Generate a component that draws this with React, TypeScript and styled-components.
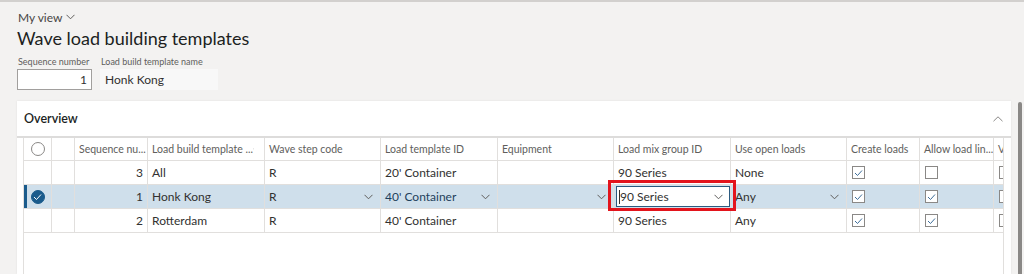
import React from 'react';
import styled, { createGlobalStyle } from 'styled-components';

const GlobalStyle = createGlobalStyle`
  html, body {
    margin: 0;
    padding: 0;
    background: #f3f2f1;
    font-family: Lato, "Open Sans", sans-serif;
    color: #323130;
    overflow: hidden;
  }
`;

const Page = styled.div`
  width: 1024px;
  height: 274px;
  border-top: 2px solid #d2d0ce;
  box-sizing: border-box;
  overflow: hidden;
  display: flex;
  flex-direction: column;
`;

const Top = styled.div`
  padding: 8px 0 0 17px;
  display: flex;
  flex-direction: column;
`;

const ViewSwitch = styled.div`
  display: flex;
  align-items: center;
  gap: 4px;
  font-size: 12px;
  color: #484644;
  height: 14px;
  padding-left: 1px;
`;

const Title = styled.h1`
  margin: 2px 0 0;
  font-size: 18px;
  font-weight: 400;
  color: #201f1e;
  line-height: 24px;
`;

const Fields = styled.div`
  display: flex;
  gap: 8px;
  margin-top: 6px;
`;

const Field = styled.div<{ $width: number }>`
  width: ${p => p.$width}px;
  display: flex;
  flex-direction: column;
  gap: 1px;
`;

const FieldLabel = styled.label`
  font-size: 9px;
  color: #605e5c;
  line-height: 12px;
  padding-left: 1px;
  white-space: nowrap;
`;

const FieldInput = styled.div<{ $right?: boolean; $plain?: boolean }>`
  height: 21px;
  box-sizing: border-box;
  display: flex;
  align-items: center;
  justify-content: ${p => (p.$right ? 'flex-end' : 'flex-start')};
  padding: 0 4px;
  font-size: 12px;
  background: ${p => (p.$plain ? '#f8f8f8' : '#fff')};
  border: 1px solid ${p => (p.$plain ? '#f8f8f8' : '#a19f9d')};
`;

const Body = styled.div`
  display: flex;
  flex: 1;
  margin-top: 11px;
  min-height: 0;
`;

const Card = styled.section`
  margin-left: 17px;
  width: 994px;
  background: #fff;
  box-shadow: 0 0 2px rgba(0, 0, 0, 0.08);
  display: flex;
  flex-direction: column;
`;

const CardHeader = styled.div`
  height: 35px;
  display: flex;
  align-items: center;
  justify-content: space-between;
  padding: 0 8px 0 7px;
  border-bottom: 2px solid #dddcdb;
  font-size: 12.5px;
  font-weight: 600;
  color: #201f1e;
`;

const ScrollTrack = styled.div`
  margin-left: 7px;
  width: 4px;
  display: flex;
  padding-top: 1px;
`;

const ScrollThumb = styled.div`
  flex: 1;
  background: #8a8886;
  border-radius: 2px 2px 0 0;
`;

const GridWrap = styled.div`
  margin: 0 7px 0 6px;
  flex: 1;
  overflow: hidden;
  border-left: 1px solid #e1dfdd;
  border-right: 1px solid #e1dfdd;
`;

const COLS = '28px 23px 73px 117px 116px 117px 116px 117px 116px 73px 74px 40px';

const Row = styled.div<{ $header?: boolean; $selected?: boolean }>`
  display: grid;
  grid-template-columns: ${COLS};
  height: ${p => (p.$header ? 23 : 24)}px;
  border-bottom: 1px solid #e1dfdd;
  box-sizing: border-box;
  background: ${p => (p.$selected ? '#cfdfeb' : '#fff')};
  position: relative;
`;

const SelectBar = styled.span`
  position: absolute;
  left: 0;
  top: 0;
  bottom: 0;
  width: 3px;
  background: #1a5b8c;
`;

const Cell = styled.div<{
  $align?: 'left' | 'right' | 'center';
  $header?: boolean;
  $lined?: boolean;
  $editing?: boolean;
}>`
  display: flex;
  align-items: center;
  justify-content: ${p => (p.$align === 'right' ? 'flex-end' : p.$align === 'center' ? 'center' : 'space-between')};
  padding: 0 4px 0 4px;
  border-right: ${p => (p.$lined === false ? 'none' : '1px solid #e1dfdd')};
  font-size: ${p => (p.$header ? '10.5px' : '12px')};
  color: ${p => (p.$header ? '#605e5c' : '#323130')};
  white-space: nowrap;
  overflow: ${p => (p.$editing ? 'visible' : 'hidden')};
  position: relative;
  z-index: ${p => (p.$editing ? 2 : 'auto')};
  min-width: 0;
`;

const Chev = styled.svg`
  flex: none;
  margin-right: 3px;
`;

const Radio = styled.span<{ $checked?: boolean }>`
  width: 14px;
  height: 14px;
  border-radius: 50%;
  box-sizing: border-box;
  border: 1px solid ${p => (p.$checked ? '#1a5b8c' : '#8a8886')};
  background: ${p => (p.$checked ? '#1a5b8c' : '#fff')};
  display: flex;
  align-items: center;
  justify-content: center;
`;

const Box = styled.span`
  width: 13px;
  height: 13px;
  box-sizing: border-box;
  border: 1px solid #8a8886;
  background: #fff;
  display: flex;
  align-items: center;
  justify-content: center;
  margin-left: 1px;
`;

const EditInput = styled.div`
  position: absolute;
  left: 2px;
  right: 0;
  top: 1px;
  bottom: 1px;
  border: 1px solid #2b5a80;
  background: #fff;
  display: flex;
  align-items: center;
  justify-content: space-between;
  padding: 0 3px 0 2px;
  font-size: 12px;
`;

const EditText = styled.span`
  display: flex;
  align-items: center;
`;

const Caret = styled.span`
  width: 1px;
  height: 14px;
  background: #323130;
`;

const Highlight = styled.span`
  position: absolute;
  left: -6px;
  right: -6px;
  top: -5px;
  bottom: -3px;
  border: 3px solid #e3141c;
  pointer-events: none;
`;

const SelectedText = styled.span`
  color: #1f3f5c;
`;

const Chevron = ({ color = '#605e5c' }: { color?: string }) => (
  <Chev width="9" height="6" viewBox="0 0 9 6">
    <path d="M0.5 0.8 L4.5 4.8 L8.5 0.8" fill="none" stroke={color} strokeWidth="1" />
  </Chev>
);

const Check = ({ color = '#3d6d99' }: { color?: string }) => (
  <svg width="9" height="8" viewBox="0 0 9 8">
    <path d="M1 4 L3.5 6.5 L8 1.5" fill="none" stroke={color} strokeWidth="1" />
  </svg>
);

const CheckBox = ({ on }: { on: boolean }) => <Box>{on && <Check />}</Box>;

type RowData = {
  seq: number;
  name: string;
  wave: string;
  template: string;
  mix: string;
  open: string;
  create: boolean;
  allow: boolean;
  selected?: boolean;
};

const rows: RowData[] = [
  { seq: 3, name: 'All', wave: 'R', template: "20' Container", mix: '90 Series', open: 'None', create: true, allow: false },
  { seq: 1, name: 'Honk Kong', wave: 'R', template: "40' Container", mix: '90 Series', open: 'Any', create: true, allow: true, selected: true },
  { seq: 2, name: 'Rotterdam', wave: 'R', template: "40' Container", mix: '90 Series', open: 'Any', create: true, allow: true },
];

const headers = [
  'Sequence nu...',
  'Load build template ...',
  'Wave step code',
  'Load template ID',
  'Equipment',
  'Load mix group ID',
  'Use open loads',
  'Create loads',
  'Allow load lin...',
  'Va',
];

const App: React.FC = () => {
  return (
    <>
      <GlobalStyle />
      <Page>
        <Top>
          <ViewSwitch>
            My view
            <svg width="9" height="6" viewBox="0 0 9 6">
              <path d="M0.5 0.8 L4.5 4.8 L8.5 0.8" fill="none" stroke="#605e5c" strokeWidth="1" />
            </svg>
          </ViewSwitch>
          <Title>Wave load building templates</Title>
          <Fields>
            <Field $width={75}>
              <FieldLabel>Sequence number</FieldLabel>
              <FieldInput $right>1</FieldInput>
            </Field>
            <Field $width={118}>
              <FieldLabel>Load build template name</FieldLabel>
              <FieldInput $plain>Honk Kong</FieldInput>
            </Field>
          </Fields>
        </Top>

        <Body>
          <Card>
            <CardHeader>
              Overview
              <svg width="10" height="6" viewBox="0 0 10 6">
                <path d="M0.5 5.2 L5 0.8 L9.5 5.2" fill="none" stroke="#8a8886" strokeWidth="1" />
              </svg>
            </CardHeader>
            <GridWrap>
              <Row $header>
                <Cell $align="center" $header>
                  <Radio />
                </Cell>
                <Cell $header />
                {headers.map((h, i) => (
                  <Cell key={h} $header $lined={i !== headers.length - 1}>
                    <span>{h}</span>
                    {i === 1 && (
                      <svg width="7" height="10" viewBox="0 0 7 10" style={{ marginRight: 6 }}>
                        <path d="M3.5 9.5 V1 M0.8 3.5 L3.5 0.8 L6.2 3.5" fill="none" stroke="#8a8886" strokeWidth="1" />
                      </svg>
                    )}
                  </Cell>
                ))}
              </Row>
              {rows.map(r => (
                <Row key={r.seq} $selected={r.selected}>
                  {r.selected && <SelectBar />}
                  <Cell $align="center">
                    {r.selected && (
                      <Radio $checked>
                        <Check color="#fff" />
                      </Radio>
                    )}
                  </Cell>
                  <Cell />
                  <Cell $align="right">{r.seq}</Cell>
                  <Cell>{r.name}</Cell>
                  <Cell>
                    <span>{r.wave}</span>
                    {r.selected && <Chevron />}
                  </Cell>
                  <Cell>
                    {r.selected ? <SelectedText>{r.template}</SelectedText> : <span>{r.template}</span>}
                    {r.selected && <Chevron />}
                  </Cell>
                  <Cell>
                    <span />
                    {r.selected && <Chevron />}
                  </Cell>
                  <Cell $editing={r.selected}>
                    {r.selected ? (
                      <>
                        <EditInput>
                          <EditText>
                            <Caret />
                            {r.mix}
                          </EditText>
                          <Chevron />
                        </EditInput>
                        <Highlight />
                      </>
                    ) : (
                      r.mix
                    )}
                  </Cell>
                  <Cell>
                    <span>{r.open}</span>
                    {r.selected && <Chevron />}
                  </Cell>
                  <Cell>
                    <CheckBox on={r.create} />
                  </Cell>
                  <Cell>
                    <CheckBox on={r.allow} />
                  </Cell>
                  <Cell $lined={false}>
                    <CheckBox on={false} />
                  </Cell>
                </Row>
              ))}
            </GridWrap>
          </Card>
          <ScrollTrack>
            <ScrollThumb />
          </ScrollTrack>
        </Body>
      </Page>
    </>
  );
};

export default App;
